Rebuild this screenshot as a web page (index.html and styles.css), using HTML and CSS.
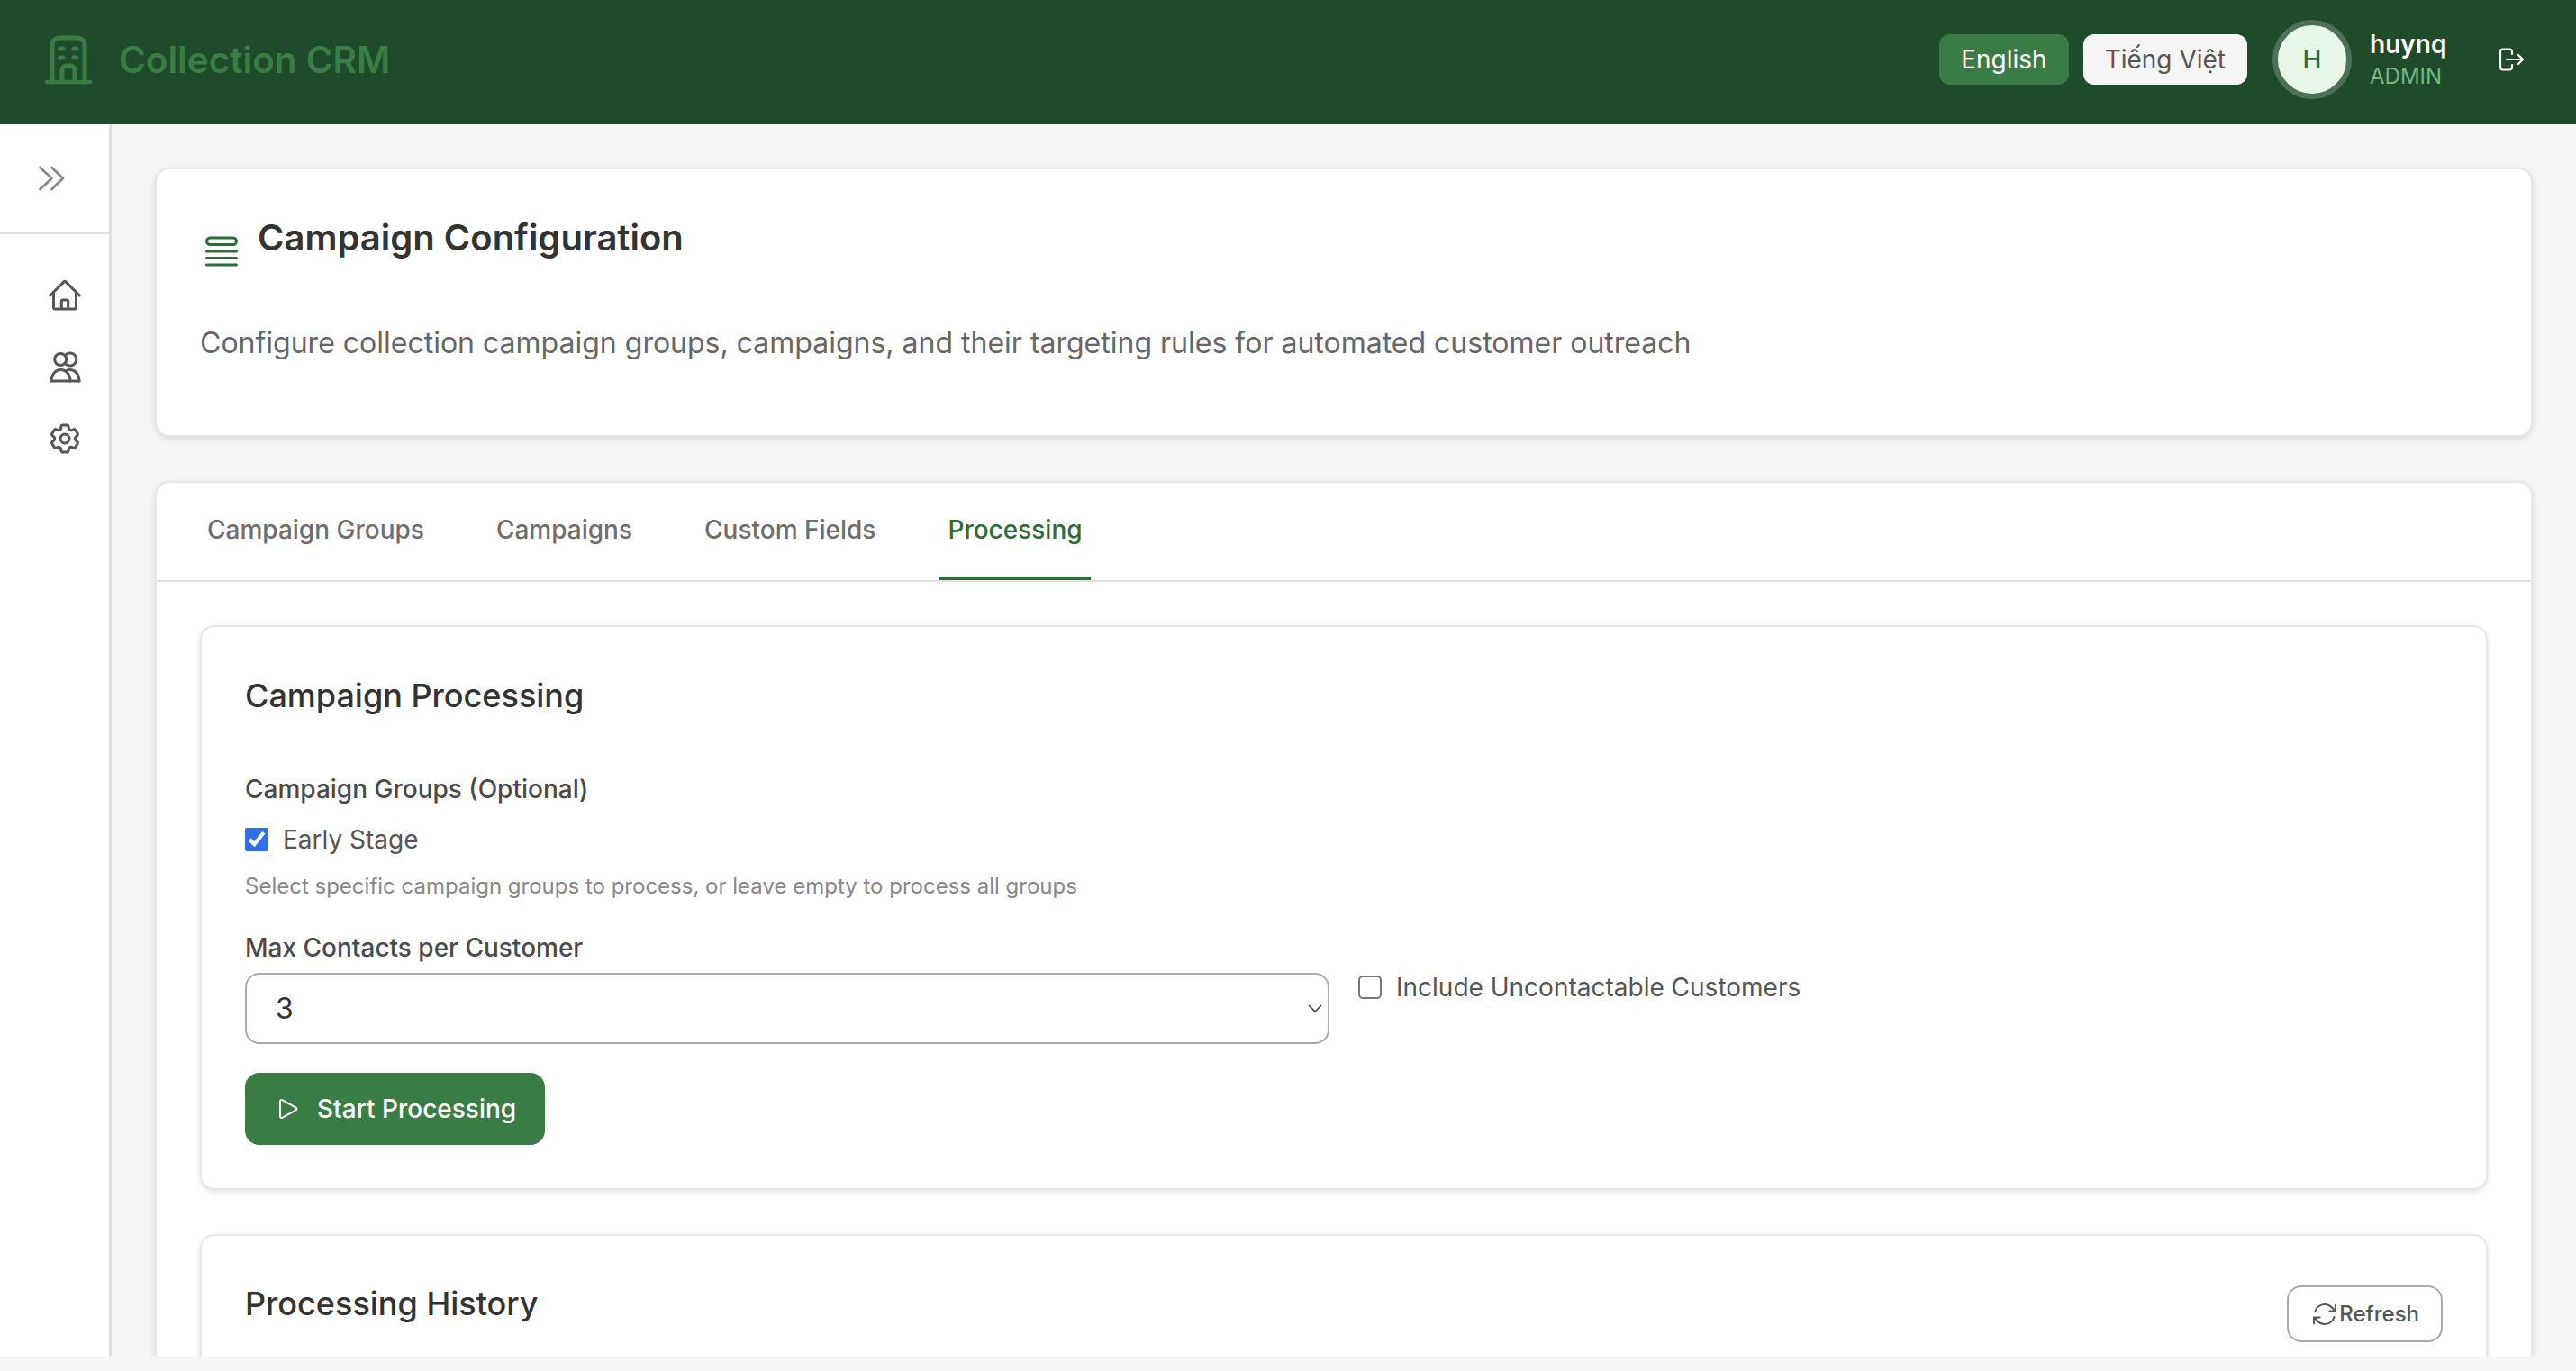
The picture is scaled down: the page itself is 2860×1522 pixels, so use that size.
FILE: index.html
```html
<!DOCTYPE html>
<html>
<head>
    <title>Collection CRM - Campaign Configuration</title>
    <link rel="stylesheet" href="styles.css">
</head>
<body>
    <div class="app">
        <header class="topbar">
            <div class="brand">
                <svg class="brand-icon" viewBox="0 0 56 56" fill="none" stroke="currentColor" stroke-width="5" stroke-linecap="round" stroke-linejoin="round">
                    <path d="M10 51V12a8 8 0 0 1 8-8h20a8 8 0 0 1 8 8v39"/>
                    <path d="M4 53h48" stroke-width="4.500"/>
                    <path d="M19 16h3m12 0h3M19 26h3m12 0h3"/>
                    <path d="M21 51V40a5 5 0 0 1 5-5h4a5 5 0 0 1 5 5v11"/>
                </svg>
                <span class="brand-name">Collection CRM</span>
            </div>
            <div class="topbar-right">
                <button class="lang lang-active">English</button>
                <button class="lang">Tiếng Việt</button>
                <div class="avatar">H</div>
                <div class="user">
                    <div class="user-name">huynq</div>
                    <div class="user-role">ADMIN</div>
                </div>
                <svg class="logout" viewBox="0 0 32 32" fill="none" stroke="currentColor" stroke-width="2.2" stroke-linecap="round" stroke-linejoin="round">
                    <path d="M17 10V7.5a3 3 0 0 0-3-3H7a3 3 0 0 0-3 3v17a3 3 0 0 0 3 3h7a3 3 0 0 0 3-3V22"/>
                    <path d="M11 16h18m-5-5 5 5-5 5"/>
                </svg>
            </div>
        </header>

        <div class="body-row">
            <aside class="sidebar">
                <div class="sidebar-top">
                    <svg class="toggle" viewBox="0 0 40 40" fill="none" stroke="currentColor" stroke-width="2.8" stroke-linecap="round" stroke-linejoin="round">
                        <path d="m7.5 8 13 12-13 12M20.5 8 33 20 20.5 32"/>
                    </svg>
                </div>
                <nav class="nav">
                    <svg class="nav-icon" viewBox="0 0 24 24" fill="none" stroke="currentColor" stroke-width="1.8" stroke-linecap="round" stroke-linejoin="round">
                        <path d="m2.25 12 8.954-8.955c.44-.439 1.152-.439 1.591 0L21.75 12M4.5 9.750v10.125c0 .621.504 1.125 1.125 1.125H9.750v-4.875c0-.621.504-1.125 1.125-1.125h2.250c.621 0 1.125.504 1.125 1.125V21h4.125c.621 0 1.125-.504 1.125-1.125V9.750M8.250 21h8.250"/>
                    </svg>
                    <svg class="nav-icon" viewBox="0 0 40 40" fill="none" stroke="currentColor" stroke-width="3" stroke-linecap="round" stroke-linejoin="round">
                        <circle cx="15.2" cy="11" r="6.5"/>
                        <path d="M21.5 5.500a7 7 0 1 1 0 11"/>
                        <path d="M5 35c0-7 4.500-12.500 10.500-12.500S26 28 26 35"/>
                        <path d="M5 35h31"/>
                        <path d="M21 24c1.500-1 3-1.500 4.500-1.500C31.500 22.500 36 28 36 35"/>
                    </svg>
                    <svg class="nav-icon" viewBox="0 0 24 24" fill="none" stroke="currentColor" stroke-width="1.8" stroke-linecap="round" stroke-linejoin="round">
                        <path d="M9.594 3.94c.09-.542.56-.94 1.11-.94h2.593c.55 0 1.02.398 1.11.94l.213 1.281c.063.374.313.686.645.87.074.04.147.083.22.127.324.196.72.257 1.075.124l1.217-.456a1.125 1.125 0 0 1 1.37.49l1.296 2.247a1.125 1.125 0 0 1-.26 1.431l-1.003.827c-.293.24-.438.613-.431.992a6.759 6.759 0 0 1 0 .255c-.007.378.138.75.43.99l1.005.828c.424.35.534.954.26 1.43l-1.298 2.247a1.125 1.125 0 0 1-1.369.491l-1.217-.456c-.355-.133-.75-.072-1.076.124a6.57 6.57 0 0 1-.22.128c-.331.183-.581.495-.644.869l-.213 1.28c-.09.543-.56.941-1.11.941h-2.594c-.55 0-1.02-.398-1.11-.94l-.213-1.281c-.062-.374-.312-.686-.644-.87a6.52 6.52 0 0 1-.22-.127c-.325-.196-.72-.257-1.076-.124l-1.217.456a1.125 1.125 0 0 1-1.369-.49l-1.297-2.247a1.125 1.125 0 0 1 .26-1.431l1.004-.827c.292-.24.437-.613.43-.992a6.932 6.932 0 0 1 0-.255c.007-.378-.138-.75-.43-.99l-1.004-.828a1.125 1.125 0 0 1-.26-1.43l1.297-2.247a1.125 1.125 0 0 1 1.37-.491l1.216.456c.356.133.751.072 1.076-.124.072-.044.146-.087.22-.128.332-.183.582-.495.644-.869l.214-1.281z"/>
                        <path d="M15 12a3 3 0 1 1-6 0 3 3 0 0 1 6 0z"/>
                    </svg>
                </nav>
            </aside>

            <main class="main">
                <section class="card page-head">
                    <div class="page-title-row">
                        <svg class="title-icon" viewBox="0 0 24 24" fill="none" stroke="currentColor" stroke-width="1.5" stroke-linecap="round" stroke-linejoin="round">
                            <path d="M3.75 12h16.5m-16.5 3.75h16.5M3.75 19.5h16.5M5.625 4.5h12.75a1.875 1.875 0 0 1 0 3.75H5.625a1.875 1.875 0 0 1 0-3.75z"/>
                        </svg>
                        <h1>Campaign Configuration</h1>
                    </div>
                    <p class="page-desc">Configure collection campaign groups, campaigns, and their targeting rules for automated customer outreach</p>
                </section>

                <section class="card tabs-card">
                    <div class="tabs">
                        <div class="tab">Campaign Groups</div>
                        <div class="tab">Campaigns</div>
                        <div class="tab">Custom Fields</div>
                        <div class="tab tab-active">Processing</div>
                    </div>
                    <div class="tab-body">
                        <section class="card inner">
                            <h2>Campaign Processing</h2>
                            <div class="field-label groups-label">Campaign Groups (Optional)</div>
                            <label class="check">
                                <input type="checkbox" checked>
                                <span>Early Stage</span>
                            </label>
                            <div class="hint">Select specific campaign groups to process, or leave empty to process all groups</div>
                            <div class="options-row">
                                <div class="select-col">
                                    <div class="field-label">Max Contacts per Customer</div>
                                    <div class="select-wrap">
                                        <select class="select">
                                            <option>3</option>
                                        </select>
                                        <svg class="select-arrow" viewBox="0 0 16 10" fill="none" stroke="currentColor" stroke-width="1.6">
                                            <path d="m1 1 7 7 7-7"/>
                                        </svg>
                                    </div>
                                </div>
                                <label class="check uncontactable">
                                    <input type="checkbox">
                                    <span>Include Uncontactable Customers</span>
                                </label>
                            </div>
                            <button class="start-btn">
                                <svg class="btn-icon" viewBox="0 0 24 24" fill="none" stroke="currentColor" stroke-width="1.5" stroke-linecap="round" stroke-linejoin="round">
                                    <path d="M5.25 5.653c0-.856.917-1.398 1.667-.986l11.54 6.348a1.125 1.125 0 0 1 0 1.971l-11.54 6.347a1.125 1.125 0 0 1-1.667-.985V5.653z"/>
                                </svg>
                                Start Processing
                            </button>
                        </section>

                        <section class="card inner history">
                            <div class="history-head">
                                <h2>Processing History</h2>
                                <button class="refresh-btn">
                                    <svg class="refresh-icon" viewBox="0 0 24 24" fill="none" stroke="currentColor" stroke-width="1.5" stroke-linecap="round" stroke-linejoin="round">
                                        <path d="M16.023 9.348h4.992v-.001M2.985 19.644v-4.992m0 0h4.992m-4.993 0 3.181 3.183a8.25 8.250 0 0 0 13.803-3.7M4.031 9.865a8.25 8.250 0 0 1 13.803-3.7l3.181 3.182m0-4.991v4.990"/>
                                    </svg>
                                    Refresh
                                </button>
                            </div>
                        </section>
                    </div>
                </section>
            </main>
        </div>
    </div>
</body>
</html>
```

FILE: styles.css
```css
* {
    box-sizing: border-box;
}
body {
    margin: 0;
    background-color: #f5f5f5;
    font-family: Inter, "Noto Sans", sans-serif;
    color: #333;
}
h1, h2, p {
    margin: 0;
}
button {
    font-family: inherit;
    cursor: pointer;
}

.app {
    height: 1506px;
    overflow: hidden;
    display: flex;
    flex-direction: column;
}

/* top bar */
.topbar {
    flex: none;
    height: 138px;
    background-color: #1e4b2b;
    display: flex;
    align-items: center;
    justify-content: space-between;
    padding: 0 56px 6px 48px;
}
.brand {
    display: flex;
    align-items: center;
    gap: 28px;
    color: #3a7d44;
}
.brand-icon {
    width: 56px;
    height: 56px;
}
.brand-name {
    font-size: 40.5px;
    font-weight: 600;
}
.topbar-right {
    display: flex;
    align-items: center;
}
.lang {
    height: 56px;
    padding: 0 24px;
    margin-right: 16px;
    border: none;
    border-radius: 12px;
    background-color: #f5f5f5;
    color: #555;
    font-size: 28px;
}
.lang-active {
    background-color: #3a7d44;
    color: #fff;
}
.avatar {
    width: 88px;
    height: 88px;
    margin-left: 12px;
    border-radius: 50%;
    border: 6px solid #4c7158;
    background-color: #e8f5e9;
    color: #2e6b38;
    font-size: 28px;
    font-weight: 500;
    display: flex;
    align-items: center;
    justify-content: center;
}
.user {
    margin-left: 20px;
    width: 141px;
}
.user-name {
    font-size: 28px;
    font-weight: 600;
    line-height: 36px;
    margin-top: 1px;
    color: #fff;
}
.user-role {
    font-size: 24px;
    line-height: 36px;
    color: #74b97f;
}
.logout {
    width: 32px;
    height: 32px;
    color: #fff;
}

/* sidebar */
.body-row {
    flex: 1;
    display: flex;
    min-height: 0;
}
.sidebar {
    flex: none;
    width: 124px;
    background-color: #fff;
    border-right: 3px solid #e0e0e0;
}
.sidebar-top {
    height: 122px;
    border-bottom: 3px solid #e0e0e0;
    padding: 40px 0 0 37px;
    color: #888;
}
.toggle {
    width: 40px;
    height: 40px;
    display: block;
}
.nav {
    display: flex;
    flex-direction: column;
    gap: 39.5px;
    padding: 48px 0 0 52px;
    color: #555;
}
.nav-icon {
    width: 40px;
    height: 40px;
    display: block;
}

/* main column */
.main {
    flex: 1;
    min-width: 0;
    padding: 48px 48px 0;
    display: flex;
    flex-direction: column;
    gap: 49px;
}
.card {
    background-color: #fff;
    border: 2px solid #e6e6e6;
    border-radius: 16px;
    box-shadow: 0 2px 6px rgba(0, 0, 0, 0.12);
}
.page-head {
    flex: none;
    height: 299px;
    padding: 48px;
}
.page-title-row {
    display: flex;
    align-items: flex-start;
    gap: 16px;
}
.title-icon {
    width: 48px;
    height: 48px;
    margin-top: 19px;
    color: #2e6b38;
    flex: none;
}
h1 {
    font-size: 40px;
    font-weight: 600;
    line-height: 56px;
    color: #333;
}
.page-desc {
    margin-top: 54px;
    font-size: 32px;
    line-height: 48px;
    color: #666;
}

/* tabs */
.tabs-card {
    flex: 1;
    border-bottom-left-radius: 0;
    border-bottom-right-radius: 0;
}
.tabs {
    height: 110px;
    display: flex;
    gap: 62px;
    padding: 0 47px;
    border-bottom: 2px solid #e0e0e0;
}
.tab {
    height: 108px;
    padding: 0 9px;
    font-size: 28px;
    font-weight: 500;
    line-height: 104px;
    color: #6e6e6e;
    border-bottom: 4px solid transparent;
}
.tab-active {
    color: #2e6b38;
    border-bottom-color: #2e6b38;
}
.tab-body {
    padding: 48px;
    display: flex;
    flex-direction: column;
    gap: 49px;
}

/* inner cards */
.inner {
    padding: 48px;
}
h2 {
    font-size: 36px;
    font-weight: 500;
    line-height: 56px;
    color: #333;
}
.field-label {
    font-size: 28px;
    font-weight: 500;
    line-height: 40px;
    color: #4a4a4a;
}
.groups-label {
    margin-top: 56px;
}
.check {
    display: flex;
    align-items: center;
    gap: 16px;
    font-size: 28px;
    line-height: 40px;
    color: #555;
}
.check input {
    width: 26px;
    height: 26px;
    margin: 0;
    flex: none;
    accent-color: #2f6fed;
}
.check input:not(:checked) {
    appearance: none;
    background-color: #fff;
    border: 2px solid #767676;
    border-radius: 5px;
}
.groups-label + .check {
    margin-top: 16px;
}
.hint {
    margin-top: 14px;
    font-size: 24px;
    line-height: 36px;
    color: #888;
}
.options-row {
    display: flex;
    align-items: flex-start;
    margin-top: 30px;
}
.select-col {
    width: 1204px;
    flex: none;
}
.select-wrap {
    position: relative;
    margin-top: 8px;
}
.select {
    display: block;
    width: 100%;
    height: 79px;
    padding: 0 32px;
    border: 2px solid #aaa;
    border-radius: 16px;
    background-color: #fff;
    color: #333;
    font-family: inherit;
    font-size: 32px;
    appearance: none;
}
.select-arrow {
    position: absolute;
    right: 8px;
    top: 35px;
    width: 16px;
    height: 10px;
    color: #444;
}
.uncontactable {
    margin-left: 32px;
    margin-top: 44px;
}
.start-btn {
    display: flex;
    align-items: center;
    gap: 16px;
    height: 80px;
    margin-top: 32px;
    padding: 0 32px;
    border: none;
    border-radius: 16px;
    background-color: #3a7d44;
    color: #fff;
    font-size: 28px;
    font-weight: 500;
}
.btn-icon {
    width: 32px;
    height: 32px;
}
.history-head {
    display: flex;
    align-items: flex-start;
    justify-content: space-between;
}
.history-head h2 {
    line-height: 54px;
}
.refresh-btn {
    display: flex;
    align-items: center;
    height: 63px;
    margin-top: 7px;
    padding: 0 24px;
    border: 2px solid #aaa;
    border-radius: 16px;
    background-color: #fff;
    color: #555;
    font-size: 24px;
    font-weight: 500;
}
.refresh-icon {
    width: 32px;
    height: 32px;
}
```
